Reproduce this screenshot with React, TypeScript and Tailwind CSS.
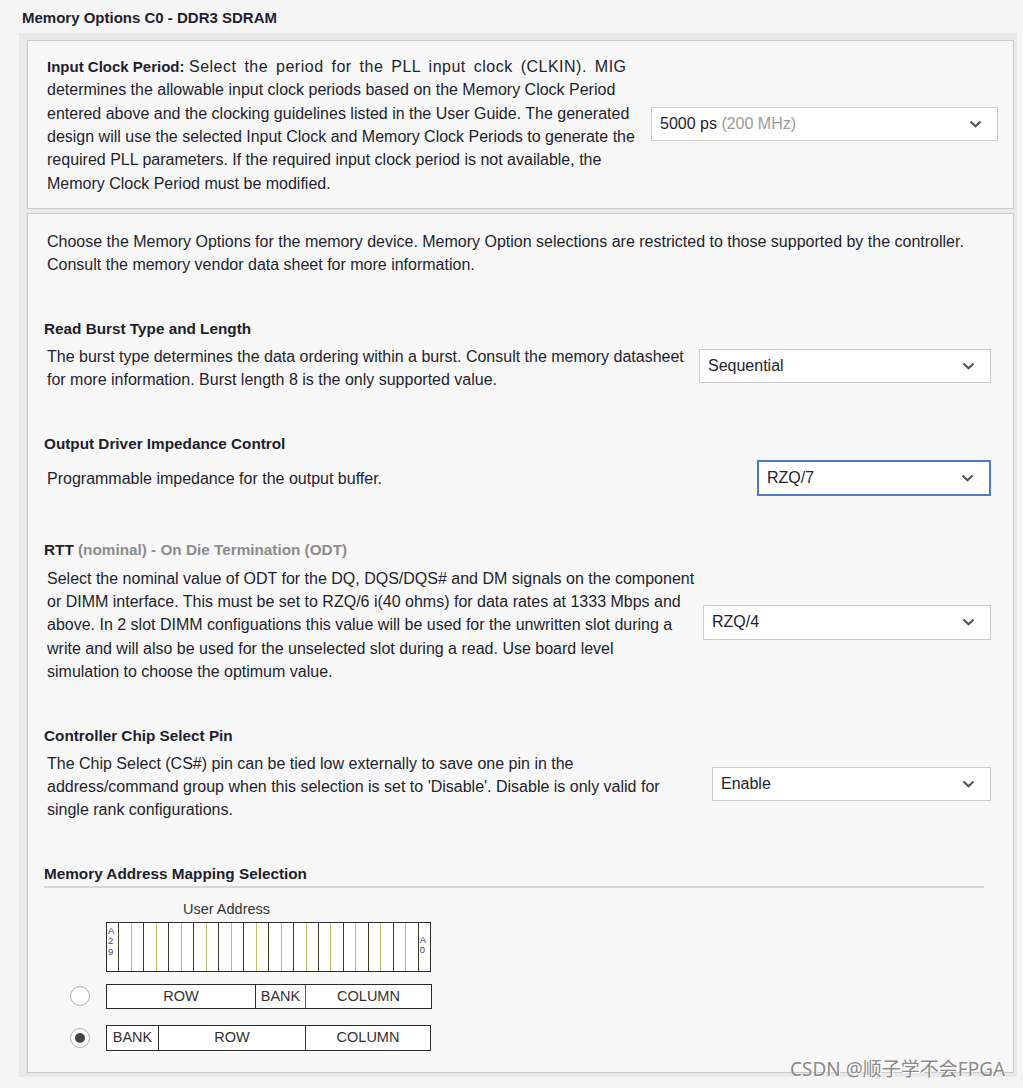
import React from "react";

const Chevron = () => (
  <svg width="13" height="8" viewBox="0 0 13 8" className="shrink-0">
    <path d="M1.5 1.5 L6.5 6.3 L11.5 1.5" fill="none" stroke="#555" strokeWidth="2.2" />
  </svg>
);

function Select({
  w,
  h,
  focused,
  children,
}: {
  w: string;
  h: string;
  focused?: boolean;
  children: React.ReactNode;
}) {
  return (
    <div
      className={
        "flex items-center justify-between bg-white pl-2 pr-[15px] text-[16px] " +
        w +
        " " +
        h +
        " " +
        (focused ? "border-2 border-[#4d79c9]" : "border border-[#cacaca]")
      }
    >
      <span>{children}</span>
      <Chevron />
    </div>
  );
}

function Header({ children }: { children: React.ReactNode }) {
  return <div className="pl-4 text-[15.3px] font-bold leading-[20px]">{children}</div>;
}

export default function App() {
  const cells = Array.from({ length: 26 });
  return (
    <div
      className="relative w-[1023px] h-[1088px] overflow-hidden bg-[#f5f5f5] text-[#1e1e2e]"
      style={{ fontFamily: '"Liberation Sans", Arial, sans-serif' }}
    >
      <div className="pl-[22px] pt-[9px] h-[33px] text-[15px] font-bold leading-[18px]">
        Memory Options C0 - DDR3 SDRAM
      </div>
      <div className="ml-[19px] w-[998px] bg-[#e9e9e9] pl-[8px] pr-[3px] pt-[7px] pb-[4px] flex flex-col gap-[4px]">
        {/* Box 1 */}
        <div className="border border-[#c9c9c9] bg-[#f7f7f7] h-[169px] flex items-center justify-between pl-[19px] pr-[15px] pt-[1px]">
          <div className="text-[16px] leading-[23.4px] w-[600px] whitespace-nowrap">
            <b className="text-[15px]">Input Clock Period:</b>{" "}
            <span className="tracking-[0.5px] [word-spacing:3px]">
              Select the period for the PLL input clock (CLKIN). MIG
            </span>
            <br />
            determines the allowable input clock periods based on the Memory Clock Period
            <br />
            entered above and the clocking guidelines listed in the User Guide. The generated
            <br />
            design will use the selected Input Clock and Memory Clock Periods to generate the
            <br />
            required PLL parameters. If the required input clock period is not available, the
            <br />
            Memory Clock Period must be modified.
          </div>
          <div className="mb-[3px]">
            <Select w="w-[347px]" h="h-[34px]">
              5000 ps <span className="text-[#9a9a9a]">(200 MHz)</span>
            </Select>
          </div>
        </div>
        {/* Box 2 */}
        <div className="border border-[#c9c9c9] bg-[#f7f7f7] h-[860px] pt-[16px] pr-[22px]">
          <div className="pl-[19px] text-[16px] leading-[23.4px] whitespace-nowrap">
            Choose the Memory Options for the memory device. Memory Option selections are restricted to those supported by the controller.
            <br />
            Consult the memory vendor data sheet for more information.
          </div>

          {/* Read Burst */}
          <div className="mt-[42px]">
            <Header>Read Burst Type and Length</Header>
            <div className="mt-[6px] flex items-center justify-between">
              <div className="pl-[19px] text-[16px] leading-[23.4px] whitespace-nowrap">
                The burst type determines the data ordering within a burst. Consult the memory datasheet
                <br />
                for more information. Burst length 8 is the only supported value.
              </div>
              <div className="mb-[5px]">
                <Select w="w-[292px]" h="h-[34px]">Sequential</Select>
              </div>
            </div>
          </div>

          {/* Output Driver */}
          <div className="mt-[42px]">
            <Header>Output Driver Impedance Control</Header>
            <div className="mt-[6px] flex items-center justify-between">
              <div className="pl-[19px] text-[16px] leading-[23.4px] pt-[3px]">
                Programmable impedance for the output buffer.
              </div>
              <Select w="w-[234px]" h="h-[36px]" focused>
                RZQ/7
              </Select>
            </div>
          </div>

          {/* RTT */}
          <div className="mt-[44px]">
            <Header>
              RTT <span className="text-[#8c8c8c]">(nominal) - On Die Termination (ODT)</span>
            </Header>
            <div className="mt-[7px] flex items-center justify-between">
              <div className="pl-[19px] text-[16px] leading-[23.4px] whitespace-nowrap">
                Select the nominal value of ODT for the DQ, DQS/DQS# and DM signals on the component
                <br />
                or DIMM interface. This must be set to RZQ/6 i(40 ohms) for data rates at 1333 Mbps and
                <br />
                above. In 2 slot DIMM configuations this value will be used for the unwritten slot during a
                <br />
                write and will also be used for the unselected slot during a read. Use board level
                <br />
                simulation to choose the optimum value.
              </div>
              <div className="mb-[6px]">
                <Select w="w-[288px]" h="h-[35px]">RZQ/4</Select>
              </div>
            </div>
          </div>

          {/* Chip select */}
          <div className="mt-[42px]">
            <Header>Controller Chip Select Pin</Header>
            <div className="mt-[6px] flex items-center justify-between">
              <div className="pl-[19px] text-[16px] leading-[23.4px] whitespace-nowrap">
                The Chip Select (CS#) pin can be tied low externally to save one pin in the
                <br />
                address/command group when this selection is set to 'Disable'. Disable is only valid for
                <br />
                single rank configurations.
              </div>
              <div className="mb-[6px]">
                <Select w="w-[279px]" h="h-[34px]">Enable</Select>
              </div>
            </div>
          </div>

          {/* Mapping */}
          <div className="mt-[42px]">
            <Header>Memory Address Mapping Selection</Header>
            <div className="ml-[16px] mr-[7px] mt-[2px] h-[2px] bg-[#d6d6d6]" />
            <div className="pl-[42px] pt-[13px] text-[#333]">
              <div className="ml-[113px] text-[14.5px] leading-[16px]">User Address</div>
              <div className="ml-[36px] mt-[5px] flex w-[325px] h-[50px] border-[1.5px] border-[#2a2a2a] bg-white">
                {cells.map((_, i) => (
                  <div
                    key={i}
                    className={
                      "flex-1 flex flex-col pt-[3px] text-[9.5px] leading-[10.5px] text-[#44486a] " +
                      (i < 25
                        ? i % 2 === 0
                          ? "border-r-[1.5px] border-[#3a3a2a]"
                          : "border-r-[1.5px] border-[#bdbd6a]"
                        : "")
                    }
                  >
                    {i === 0 && (
                      <>
                        <span className="pl-[1px]">A</span>
                        <span className="pl-[1px]">2</span>
                        <span className="pl-[1px]">9</span>
                      </>
                    )}
                    {i === 25 && (
                      <div className="pt-[9px] pl-[1px] flex flex-col">
                        <span>A</span>
                        <span>0</span>
                      </div>
                    )}
                  </div>
                ))}
              </div>

              <div className="mt-[12px] flex items-center">
                <div className="w-[20px] h-[20px] rounded-full border-[1.5px] border-[#b0b0b0] bg-white mr-[16px]" />
                <div className="flex w-[326px] h-[25px] border-[1.5px] border-[#2a2a2a] bg-white text-[14.5px]">
                  <div className="w-[149px] flex items-center justify-center border-r-[1.5px] border-[#3a3022]">ROW</div>
                  <div className="w-[50px] flex items-center justify-center border-r-[1.5px] border-[#5a6a22]">BANK</div>
                  <div className="flex-1 flex items-center justify-center">COLUMN</div>
                </div>
              </div>

              <div className="mt-[16px] flex items-center">
                <div className="w-[20px] h-[20px] rounded-full border-[1.5px] border-[#b0b0b0] bg-white mr-[16px] flex items-center justify-center">
                  <div className="w-[10px] h-[10px] rounded-full bg-[#444]" />
                </div>
                <div className="flex w-[325px] h-[26px] border-[1.5px] border-[#2a2a2a] bg-white text-[14.5px]">
                  <div className="w-[52px] flex items-center justify-center border-r-[1.5px] border-[#2a2a2a]">BANK</div>
                  <div className="w-[147px] flex items-center justify-center border-r-[1.5px] border-[#3a3a22]">ROW</div>
                  <div className="flex-1 flex items-center justify-center">COLUMN</div>
                </div>
              </div>
            </div>
          </div>
        </div>
      </div>

      <div
        className="absolute left-[790px] top-[1056px] text-[19px] leading-[26px] text-[#8a8a8a]"
        style={{
          fontFamily: '"Noto Sans", "Noto Sans CJK SC", sans-serif',
          textShadow: "1px 1px 0 #fff",
        }}
      >
        CSDN @顺子学不会FPGA
      </div>
    </div>
  );
}
